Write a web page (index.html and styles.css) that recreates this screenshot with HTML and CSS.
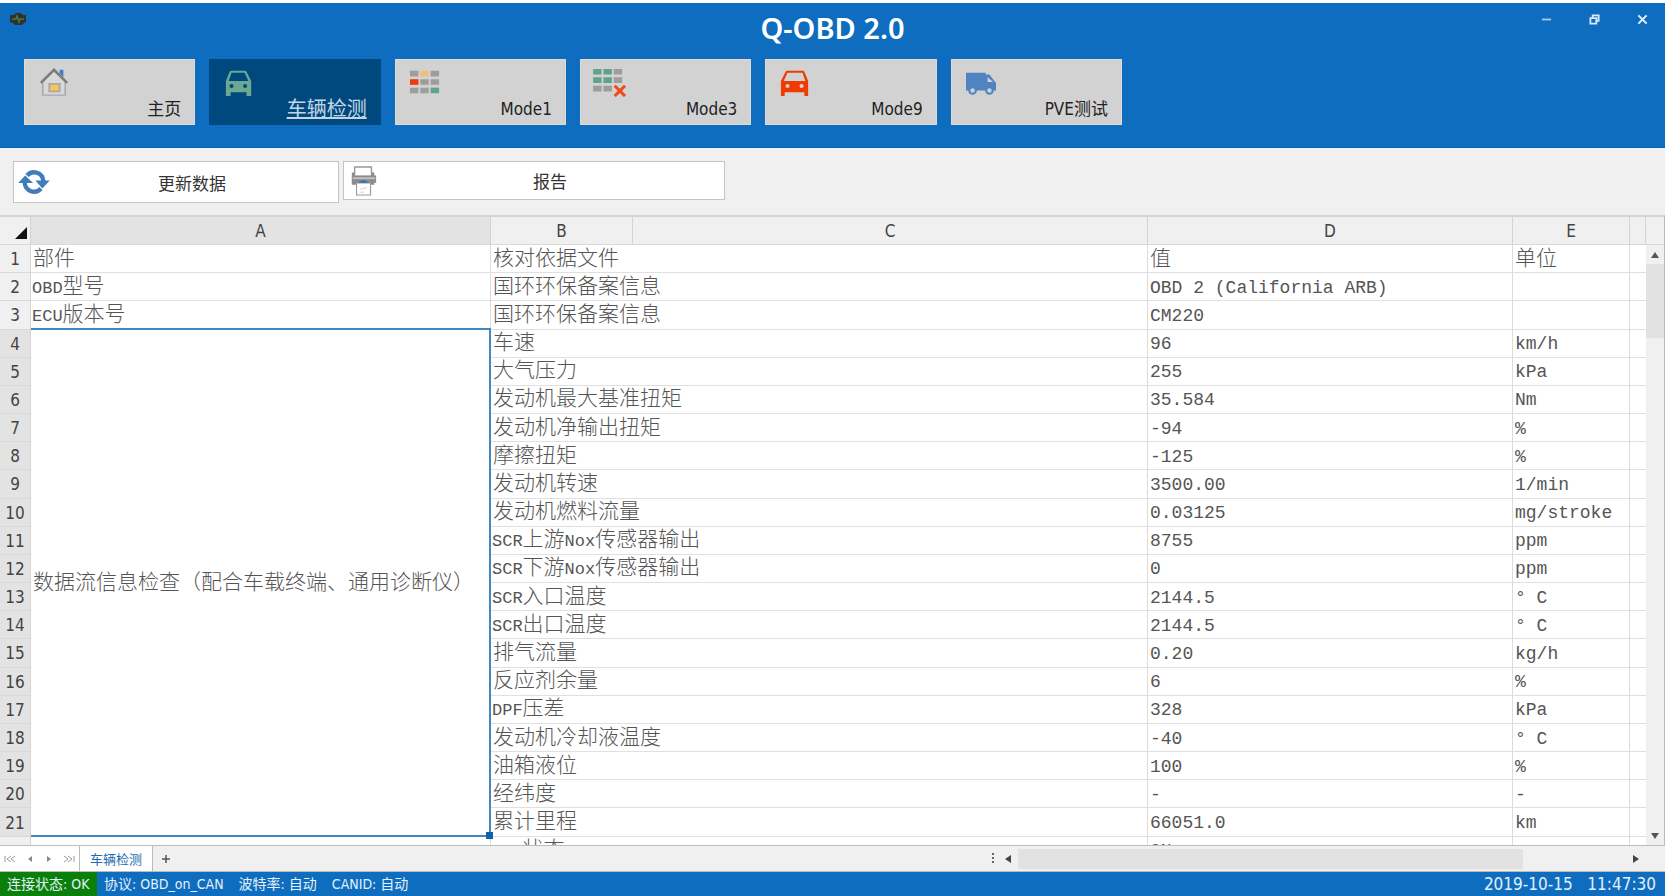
FILE: index.html
```html
<!DOCTYPE html>
<html lang="zh-CN">
<head>
<meta charset="utf-8">
<title>Q-OBD 2.0</title>
<link rel="stylesheet" href="styles.css">
</head>
<body>
<header class="top">
  <div class="titlebar">
    <svg class="app-icon" viewBox="0 0 18 14" aria-hidden="true"><path d="M2 3h3l2-2h5l2 2h3v7l-2 1-2 2H6l-2-2-3-1V4z" fill="#33302c"/><path d="M3 7h4l1-3 2 6 1-3h4" fill="none" stroke="#3f7a4a" stroke-width="1.5"/></svg>
    <h1>Q-OBD 2.0</h1>
    <div class="window-buttons">
      <button type="button" aria-label="最小化"><svg viewBox="0 0 12 12"><path d="M1 6h10" stroke="#a9cbea" stroke-width="2"/></svg></button>
      <button type="button" aria-label="还原"><svg viewBox="0 0 12 12"><path d="M4 4V1.500h6.500V7.500H8M1.500 4.500H8v6H1.500z" fill="none" stroke="#d6e7f6" stroke-width="2"/></svg></button>
      <button type="button" aria-label="关闭"><svg viewBox="0 0 12 12"><path d="M1.500 1.500l9 9M10.500 1.500l-9 9" stroke="#e6f0fa" stroke-width="2.200"/></svg></button>
    </div>
  </div>
  <nav class="tiles">
    <button type="button" class="tile">
      <svg viewBox="0 0 32 32"><path d="M22 3h4v8l-4-4z" fill="#3f80c4"/><path d="M4 15v15h24V15L16 4z" fill="#d9d9d9" stroke="#a6a6a6" stroke-width="1.500"/><path d="M2 17L16 3l14 14" fill="none" stroke="#7d7d7d" stroke-width="2.800"/><path d="M11 18h11v8H11z" fill="#fac45c" stroke="#a8a8a8" stroke-width="2"/></svg>
      <span>主页</span>
    </button>
    <button type="button" class="tile active">
      <svg viewBox="0 0 32 32"><path fill="#6aa893" fill-rule="evenodd" d="M7 4h16l1 1 5 10v16h-5v-4H7v4H2V15L6 5zM8 6L5 15h21l-4-9zM8 18a2.200 2.200 0 100 4.400A2.200 2.200 0 008 18zM22.500 18a2.200 2.200 0 100 4.400 2.200 2.200 0 000-4.400z"/></svg>
      <span>车辆检测</span>
    </button>
    <button type="button" class="tile">
      <svg viewBox="0 0 32 32"><g fill="#9d9d9d"><path d="M0 4h9v6H0zM22 4h9v6h-9zM11 13h9v6h-9zM22 13h9v6h-9zM0 22h9v6H0zM11 22h9v6h-9z"/></g><path d="M11 4h9v6h-9z" fill="#ecc079"/><path d="M0 13h9v6H0z" fill="#f03a0c"/><path d="M22 22h9v6h-9z" fill="#5fa489"/></svg>
      <span>Mode1</span>
    </button>
    <button type="button" class="tile">
      <svg class="wide" viewBox="0 0 36 32"><path fill="#5fa489" d="M0 2h9v6H0zM11 2h9v6h-9zM0 11h9v6H0zM11 11h9v6h-9z"/><path fill="#9d9d9d" d="M22 2h9v6h-9zM22 11h9v6h-9zM0 20h9v6H0zM11 20h9v6h-9z"/><path d="M23 20l11 11M34 20L23 31" stroke="#ee4a1a" stroke-width="3.200"/></svg>
      <span>Mode3</span>
    </button>
    <button type="button" class="tile">
      <svg viewBox="0 0 32 32"><path fill="#f03a00" fill-rule="evenodd" d="M7 4h18l1 1 4 10v16h-4v-4H5v4H1V15L6 5zM8 6L4 15h23l-3-9zM8 18a2.200 2.200 0 100 4.400A2.200 2.200 0 008 18zM23 18a2.200 2.200 0 100 4.400 2.200 2.200 0 000-4.400z"/></svg>
      <span>Mode9</span>
    </button>
    <button type="button" class="tile">
      <svg viewBox="0 0 32 32"><path d="M0 6h21v2h4l7 9v8H0z" fill="#4f84c0"/><path d="M23 11v5h6z" fill="#d2d2d2"/><circle cx="7" cy="25" r="3.500" fill="#d2d2d2" stroke="#4f84c0" stroke-width="2.200"/><circle cx="25" cy="25" r="3.500" fill="#d2d2d2" stroke="#4f84c0" stroke-width="2.200"/></svg>
      <span>PVE测试</span>
    </button>
  </nav>
</header>

<div class="toolbar">
  <button type="button" class="tool refresh">
    <svg viewBox="0 0 34 28"><path d="M9.500 7A10 10 0 0127 13M24.500 21A10 10 0 017 15" fill="none" stroke="#3f7cb8" stroke-width="4.600"/><path d="M0 15l7.500-8 8.500 8zM18.500 12.500H34l-8 8.500z" fill="#3f7cb8"/></svg>
    <span>更新数据</span>
  </button>
  <button type="button" class="tool report">
    <svg viewBox="0 0 30 32"><path d="M5 10V1h18v9" fill="#fff" stroke="#999" stroke-width="1.500"/><path d="M2 7h3v4h18V7h3v13H2z" fill="#8c8c8c"/><path d="M2 10h26v8H2z" fill="#8c8c8c"/><path d="M3 13h24" stroke="#c4c4c4" stroke-width="2"/><path d="M7 18h15v13H7z" fill="#fff" stroke="#999" stroke-width="1.200"/><path d="M8 18l6-3 7 3z" fill="#2f70b0"/><path d="M11 25l7-2M11 28h4" stroke="#ccc"/></svg>
    <span>报告</span>
  </button>
</div>

<main class="sheet">
  <div class="grid-view">
    <table>
      <colgroup><col class="c-num"><col class="c-a"><col class="c-b"><col class="c-c"><col class="c-d"><col class="c-e"><col></colgroup>
      <thead><tr><th><svg class="corner" viewBox="0 0 12 12"><path d="M12 0v12H0z" fill="#111"/></svg></th><th class="sel">A</th><th>B</th><th>C</th><th>D</th><th>E</th><th></th></tr></thead>
      <tbody>
        <tr><th>1</th><td>部件</td><td colspan="2">核对依据文件</td><td>值</td><td>单位</td><td></td></tr>
        <tr><th>2</th><td class="mixed"><i>OBD</i>型号</td><td colspan="2">国环环保备案信息</td><td><i>OBD 2 (California ARB)</i></td><td></td><td></td></tr>
        <tr><th>3</th><td class="mixed"><i>ECU</i>版本号</td><td colspan="2">国环环保备案信息</td><td><i>CM220</i></td><td></td><td></td></tr>
        <tr><th class="sel">4</th><td rowspan="18" class="merged">数据流信息检查（配合车载终端、通用诊断仪）<span class="selection"></span></td><td colspan="2">车速</td><td><i>96</i></td><td><i>km/h</i></td><td></td></tr>
        <tr><th class="sel">5</th><td colspan="2">大气压力</td><td><i>255</i></td><td><i>kPa</i></td><td></td></tr>
        <tr><th class="sel">6</th><td colspan="2">发动机最大基准扭矩</td><td><i>35.584</i></td><td><i>Nm</i></td><td></td></tr>
        <tr><th class="sel">7</th><td colspan="2">发动机净输出扭矩</td><td><i>-94</i></td><td><i>%</i></td><td></td></tr>
        <tr><th class="sel">8</th><td colspan="2">摩擦扭矩</td><td><i>-125</i></td><td><i>%</i></td><td></td></tr>
        <tr><th class="sel">9</th><td colspan="2">发动机转速</td><td><i>3500.00</i></td><td><i>1/min</i></td><td></td></tr>
        <tr><th class="sel">10</th><td colspan="2">发动机燃料流量</td><td><i>0.03125</i></td><td><i>mg/stroke</i></td><td></td></tr>
        <tr><th class="sel">11</th><td colspan="2" class="mixed"><i>SCR</i>上游<i>Nox</i>传感器输出</td><td><i>8755</i></td><td><i>ppm</i></td><td></td></tr>
        <tr><th class="sel">12</th><td colspan="2" class="mixed"><i>SCR</i>下游<i>Nox</i>传感器输出</td><td><i>0</i></td><td><i>ppm</i></td><td></td></tr>
        <tr><th class="sel">13</th><td colspan="2" class="mixed"><i>SCR</i>入口温度</td><td><i>2144.5</i></td><td><i>° C</i></td><td></td></tr>
        <tr><th class="sel">14</th><td colspan="2" class="mixed"><i>SCR</i>出口温度</td><td><i>2144.5</i></td><td><i>° C</i></td><td></td></tr>
        <tr><th class="sel">15</th><td colspan="2">排气流量</td><td><i>0.20</i></td><td><i>kg/h</i></td><td></td></tr>
        <tr><th class="sel">16</th><td colspan="2">反应剂余量</td><td><i>6</i></td><td><i>%</i></td><td></td></tr>
        <tr><th class="sel">17</th><td colspan="2" class="mixed"><i>DPF</i>压差</td><td><i>328</i></td><td><i>kPa</i></td><td></td></tr>
        <tr><th class="sel">18</th><td colspan="2">发动机冷却液温度</td><td><i>-40</i></td><td><i>° C</i></td><td></td></tr>
        <tr><th class="sel">19</th><td colspan="2">油箱液位</td><td><i>100</i></td><td><i>%</i></td><td></td></tr>
        <tr><th class="sel">20</th><td colspan="2">经纬度</td><td><i>-</i></td><td><i>-</i></td><td></td></tr>
        <tr><th class="sel">21</th><td colspan="2">累计里程</td><td><i>66051.0</i></td><td><i>km</i></td><td></td></tr>
        <tr><th></th><td></td><td colspan="2" class="mixed"><i>MIL</i>状态</td><td><i>ON</i></td><td></td><td></td></tr>
      </tbody>
    </table>
  </div>
  <div class="vscroll">
    <div class="vscroll-cap"></div>
    <button type="button" aria-label="向上滚动"><svg viewBox="0 0 8 6"><path d="M4 0l4 6H0z"/></svg></button>
    <div class="vthumb"></div>
    <button type="button" class="down" aria-label="向下滚动"><svg viewBox="0 0 8 6"><path d="M0 0h8L4 6z"/></svg></button>
  </div>
</main>

<div class="tabs">
  <div class="tab-nav">
    <button type="button" aria-label="第一张"><svg viewBox="0 0 12 8"><path d="M1 1v6M7 1L3 4l4 3M11 1L7 4l4 3" fill="none" stroke="#999"/></svg></button>
    <button type="button" aria-label="上一张"><svg viewBox="0 0 12 8"><path d="M8 1v6L4 4z" fill="#888"/></svg></button>
    <button type="button" aria-label="下一张"><svg viewBox="0 0 12 8"><path d="M4 1v6l4-3z" fill="#888"/></svg></button>
    <button type="button" aria-label="最后一张"><svg viewBox="0 0 12 8"><path d="M11 1v6M5 1l4 3-4 3M1 1l4 3-4 3" fill="none" stroke="#999"/></svg></button>
  </div>
  <button type="button" class="tab">车辆检测</button>
  <button type="button" class="add" aria-label="新建"><svg viewBox="0 0 8 8"><path d="M4 0v8M0 4h8" stroke="#555" stroke-width="1.500"/></svg></button>
  <div class="hscroll">
    <svg class="grip" viewBox="0 0 2 14"><path d="M1 1v12" stroke="#666" stroke-width="2" stroke-dasharray="2 2"/></svg>
    <button type="button" aria-label="向左滚动"><svg viewBox="0 0 6 8"><path d="M6 0v8L0 4z"/></svg></button>
    <div class="track"><div class="hthumb"></div></div>
    <button type="button" aria-label="向右滚动"><svg viewBox="0 0 6 8"><path d="M0 0v8l6-4z"/></svg></button>
  </div>
</div>

<footer class="status">
  <span class="ok">连接状态: OK</span>
  <span>协议: OBD_on_CAN</span>
  <span>波特率: 自动</span>
  <span>CANID: 自动</span>
  <time datetime="2019-10-15T11:47:30">2019-10-15&nbsp;&nbsp; 11:47:30</time>
</footer>
</body>
</html>
```
FILE: styles.css
```css
* { box-sizing: border-box; }

body {
  margin: 0;
  height: 100vh;
  padding-top: 3px;
  display: flex;
  flex-direction: column;
  overflow: hidden;
  background: #fff;
  color: #333;
  font-family: "DejaVu Sans Condensed", "Noto Sans CJK SC", sans-serif;
  font-size: 17px;
}

button {
  margin: 0;
  padding: 0;
  border: 0;
  background: none;
  color: inherit;
  font: inherit;
}

svg { display: block; flex: none; }

.top {
  height: 145px;
  flex: none;
  background: #0f6dbf;
  border-bottom: 1px solid #0062b8;
}

.titlebar {
  height: 56px;
  padding: 0 16px;
  display: grid;
  grid-template-columns: 1fr auto 1fr;
}

.app-icon { width: 18px; height: 14px; margin: 9px 0 0 -7px; }

h1 {
  margin: 0;
  color: #fff;
  font: 600 29px/50px "Noto Sans", "Open Sans", sans-serif;
}

.window-buttons {
  display: flex;
  justify-content: flex-end;
  gap: 36px;
  padding-top: 10px;
}
.window-buttons button { width: 12px; height: 12px; }
.window-buttons svg { width: 11px; height: 11px; }

.tiles {
  width: 1098px;
  max-width: 100%;
  margin-left: 24px;
  display: grid;
  grid-template-columns: repeat(6, 1fr);
  gap: 14px;
}

.tile {
  height: 66px;
  padding: 7px 13px 5px 14px;
  display: flex;
  flex-direction: column;
  justify-content: space-between;
  background: #d2d2d2;
  border: 1px solid #dedad5;
  color: #222;
}
.tile svg { width: 30px; height: 30px; }
.tile svg.wide { width: 34px; height: 30px; margin-left: -2px; }
.tile span { align-self: flex-end; line-height: 24px; }
.tile.active {
  background: #00497e;
  border-color: #00497e;
  color: #c3d5e4;
  font-size: 20px;
  text-decoration: underline;
}

.toolbar {
  height: 67px;
  flex: none;
  padding: 13px;
  display: flex;
  align-items: flex-start;
  gap: 4px;
  background: #f0f0f0;
}
.tool {
  padding: 0 4px;
  display: flex;
  align-items: center;
  background: #fff;
  border: 1px solid #c4c4c4;
}
.tool span { flex: 1; }
.refresh { width: 326px; height: 42px; }
.report { width: 382px; height: 39px; padding: 0 2px 0 6px; }
.refresh svg { width: 32px; height: 26px; }
.report svg { width: 28px; height: 32px; }

.sheet {
  flex: 1;
  min-height: 0;
  display: flex;
  border-top: 2px solid #d4d4d4;
  border-right: 1px solid #bbb;
  border-bottom: 1px solid #bdbdbd;
}
.grid-view { flex: 1; overflow: hidden; }

table {
  width: 100%;
  height: 648px;
  table-layout: fixed;
  border-collapse: separate;
  border-spacing: 0;
}
.c-num { width: 31px; }
.c-a { width: 460px; }
.c-b { width: 142px; }
.c-c { width: 515px; }
.c-d { width: 365px; }
.c-e { width: 117px; }

thead th { height: 28px; }
th {
  padding: 1px 0 0;
  background: #f0f0f0;
  border-right: 1px solid #d4d4d4;
  border-bottom: 1px solid #d9d9d9;
  color: #444;
  font-weight: 400;
  line-height: 24px;
}
th.sel { background: #e3e3e3; }
.corner { width: 12px; height: 12px; margin: 4px 0 0 15px; }

td {
  padding: 2px 2px 0;
  border-right: 1px solid #dcdcdc;
  border-bottom: 1px solid #e0e0e0;
  color: #555;
  font-family: "Liberation Mono", "Noto Sans CJK SC", monospace;
  font-size: 21px;
  font-weight: 300;
  line-height: 24px;
  white-space: nowrap;
}
td:last-child { border-right: 0; }
td i { font-size: 18px; font-style: normal; line-height: 1; }
.mixed { padding-left: 1px; }
.mixed i { font-size: 17px; }

.merged { position: relative; }
.selection {
  position: absolute;
  inset: -2px -1px -1px 0;
  border: solid #4486c0;
  border-width: 2px 2px 2px 0;
}
.selection::after {
  content: "";
  position: absolute;
  right: -4px;
  bottom: -4px;
  width: 7px;
  height: 7px;
  background: #1161a8;
}

.vscroll {
  width: 18px;
  display: flex;
  flex-direction: column;
  background: #f0f0f0;
}
.vscroll-cap { height: 28px; border-bottom: 1px solid #d9d9d9; }
.vscroll button { height: 19px; display: grid; place-items: center; }
.vscroll svg { width: 8px; height: 6px; fill: #555; }
.vthumb { height: 74px; background: #e2e2e2; }
.vscroll .down { margin-top: auto; }

.tabs {
  height: 26px;
  flex: none;
  display: flex;
  background: #f0f0f0;
  border-bottom: 1px solid #bbb;
}
.tab-nav {
  width: 80px;
  padding: 0 4px;
  display: flex;
  align-items: center;
  justify-content: space-between;
  background: #fff;
  border-right: 1px solid #bbb;
}
.tab-nav svg { width: 12px; height: 8px; }
.tab {
  width: 73px;
  background: #fff;
  border-right: 1px solid #bbb;
  color: #1f6cb0;
  font-size: 13px;
}
.add { width: 26px; display: grid; place-items: center; }
.add svg { width: 8px; height: 8px; }
.hscroll {
  width: 40%;
  margin-left: auto;
  padding-right: 26px;
  display: flex;
  align-items: center;
  gap: 7px;
}
.hscroll button svg { width: 6px; height: 8px; fill: #444; }
.hscroll .grip { width: 2px; height: 14px; margin: 0 4px 0 -7px; }
.track { flex: 1; height: 20px; }
.hthumb { width: 83%; height: 20px; background: #e2e2e2; }

.status {
  height: 24px;
  flex: none;
  display: flex;
  align-items: center;
  gap: 15px;
  padding-right: 9px;
  background: #0f6dbf;
  color: #e4f0fa;
  font-size: 14px;
  line-height: 24px;
}
.status .ok { width: 97px; margin-right: -8px; padding-left: 7px; background: #0a800a; }
.status time { margin-left: auto; font-size: 17px; }
```
